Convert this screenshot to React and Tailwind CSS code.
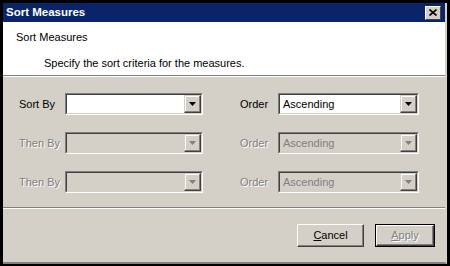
import React from "react";

const font = { fontFamily: '"Liberation Sans", Arial, sans-serif' };

function Arrow({ disabled }) {
  return (
    <svg width="7" height="4" viewBox="0 0 7 4">
      <polygon points="0,0 7,0 3.5,4" fill={disabled ? "#808080" : "#000"} />
    </svg>
  );
}

function Combo({ value, disabled, width }) {
  return (
    <div
      className={`flex h-[22px] ${width} border-t border-l border-[#808080] border-r border-b border-r-white border-b-white`}
    >
      <div className="flex flex-1 border-t border-l border-[#404040] border-r border-b border-r-[#d4d0c8] border-b-[#d4d0c8]">
        <div
          className={`flex-1 flex items-center pl-[3px] text-[11px] ${
            disabled ? "bg-[#d4d0c8] text-[#808080]" : "bg-white text-black"
          }`}
        >
          {value}
        </div>
        <div className="w-[17px] h-full flex items-center justify-center bg-[#d4d0c8] border-t border-l border-t-[#d4d0c8] border-l-[#d4d0c8] border-r border-b border-r-[#404040] border-b-[#404040] shadow-[inset_-1px_-1px_0_#808080,inset_1px_1px_0_#fff]">
          <Arrow disabled={disabled} />
        </div>
      </div>
    </div>
  );
}

function Label({ children, disabled }) {
  return (
    <div
      className={`text-[11px] flex items-center h-[22px] ${
        disabled ? "text-[#808080] [text-shadow:1px_1px_0_#fff]" : "text-black"
      }`}
    >
      {children}
    </div>
  );
}

export default function App() {
  const rows = [
    { label: "Sort By", value: "", disabled: false },
    { label: "Then By", value: "", disabled: true },
    { label: "Then By", value: "", disabled: true },
  ];
  return (
    <div className="w-[450px] h-[266px] bg-black pl-[3px] pt-[3px] pr-[3px] pb-[2px]" style={font}>
      <div className="w-full h-full flex flex-col bg-[#d4d0c8] border-r-2 border-b-2 border-r-[#d4d0c8] border-b-[#808080]">
        {/* Title bar */}
        <div className="h-[19px] bg-[#0a246a] flex items-center justify-between pl-[3px] pr-[4px]">
          <span className="text-white font-bold text-[11.5px]">Sort Measures</span>
          <div className="w-[16px] h-[14px] bg-[#d4d0c8] flex items-center justify-center border-t border-l border-white border-r border-b border-r-[#404040] border-b-[#404040]">
            <svg width="8" height="7" viewBox="0 0 8 7">
              <path d="M0.5 0.5 L7.5 6.5 M7.5 0.5 L0.5 6.5" stroke="#000" strokeWidth="1.6" />
            </svg>
          </div>
        </div>
        {/* Header */}
        <div className="h-[53px] bg-white flex flex-col text-[11px] text-black">
          <div className="pl-[13px] pt-[7px]">Sort Measures</div>
          <div className="pl-[41px] pt-[9px]">Specify the sort criteria for the measures.</div>
        </div>
        <div className="h-[2px] border-t border-[#808080] border-b border-b-white" />
        {/* Rows */}
        <div className="pl-[16px] pt-[16px] grid grid-cols-[46px_138px_37px_38px_141px] gap-y-[17px]">
          {rows.map((r, i) => (
            <React.Fragment key={i}>
              <Label disabled={r.disabled}>{r.label}</Label>
              <Combo value={r.value} disabled={r.disabled} width="w-[138px]" />
              <div />
              <Label disabled={r.disabled}>Order</Label>
              <Combo value="Ascending" disabled={r.disabled} width="w-[141px]" />
            </React.Fragment>
          ))}
        </div>
        <div className="mt-[14px] h-[2px] border-t border-[#808080] border-b border-b-white" />
        {/* Buttons */}
        <div className="flex justify-end gap-[11px] pr-[10px] pt-[15px]">
          <div className="w-[67px] h-[23px] bg-[#d4d0c8] border-t border-l border-white border-r border-b border-r-[#404040] border-b-[#404040] shadow-[inset_-1px_-1px_0_#808080] flex items-center justify-center text-[11px] text-black">
            <span><span className="underline">C</span>ancel</span>
          </div>
          <div className="w-[60px] h-[23px] border border-black">
            <div className="w-full h-full bg-[#d4d0c8] border-t border-l border-white border-r border-b border-r-[#404040] border-b-[#404040] shadow-[inset_-1px_-1px_0_#808080] flex items-center justify-center text-[11px] text-[#808080] [text-shadow:1px_1px_0_#fff]">
              <span><span className="underline">A</span>pply</span>
            </div>
          </div>
        </div>
      </div>
    </div>
  );
}
